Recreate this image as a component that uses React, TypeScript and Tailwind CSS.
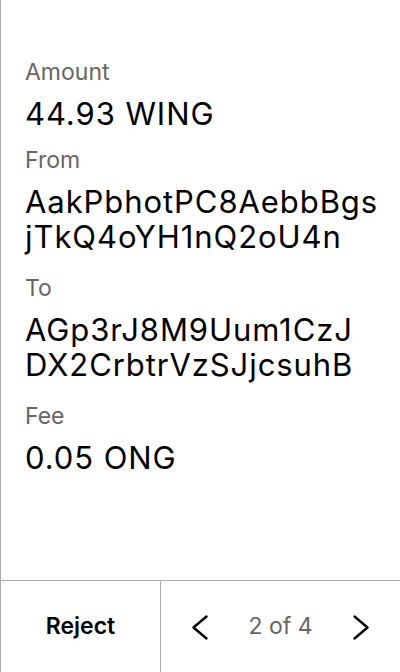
import { ReactNode } from "react";

const Field = ({ label, children, multi }: { label: string; children: ReactNode; multi?: boolean }) => (
  <div className={`flex flex-col gap-[10px] ${multi ? "mb-[6px]" : ""}`}>
    <div className="pt-[2px] text-[23px] leading-[28px] text-[#666666]">{label}</div>
    <div className={`text-[31px] tracking-[0.03em] text-black ${multi ? "leading-[35px]" : "leading-[36px]"}`}>{children}</div>
  </div>
);

const Chevron = ({ dir }: { dir: "left" | "right" }) => (
  <svg width="40" height="40" viewBox="0 0 40 40" fill="none" stroke="#000" strokeWidth="2.4" strokeLinecap="round" strokeLinejoin="round">
    {dir === "left" ? <path d="M26.5 9.5 L13.5 20.5 L26.5 31.5" /> : <path d="M13.5 9.5 L26.5 20.5 L13.5 31.5" />}
  </svg>
);

export default function App() {
  return (
    <div
      className="h-[672px] w-[400px] flex flex-col bg-white border-l border-[#aaaaaa]"
      style={{ fontFamily: "Inter, 'Noto Sans', sans-serif" }}
    >
      <div className="flex-1 flex flex-col gap-3 pt-[56px] pl-6 pr-2">
        <Field label="Amount">44.93 WING</Field>
        <Field label="From" multi>
          AakPbhotPC8AebbBgs
          <br />
          jTkQ4oYH1nQ2oU4n
        </Field>
        <Field label="To" multi>
          AGp3rJ8M9Uum1CzJ
          <br />
          DX2CrbtrVzSJjcsuhB
        </Field>
        <Field label="Fee">0.05 ONG</Field>
      </div>
      <div className="h-[92px] flex border-t border-[#aaaaaa]">
        <button className="w-[160px] border-r border-[#aaaaaa] flex items-center justify-center text-[23px] font-semibold text-black">
          Reject
        </button>
        <div className="flex-1 flex items-center justify-between pl-[19px] pr-[19px]">
          <button className="flex items-center justify-center">
            <Chevron dir="left" />
          </button>
          <span className="text-[23px] text-[#666666]">2 of 4</span>
          <button className="flex items-center justify-center">
            <Chevron dir="right" />
          </button>
        </div>
      </div>
    </div>
  );
}
